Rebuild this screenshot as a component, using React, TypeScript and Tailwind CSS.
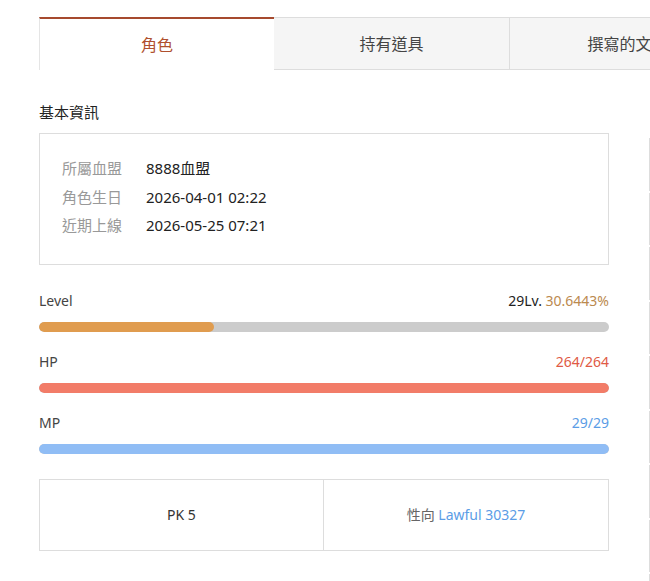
const FONT = "font-['Noto_Sans','Noto_Sans_CJK_TC',sans-serif]";

const tabs = ["角色", "持有道具", "撰寫的文章"];

const info = [
  { label: "所屬血盟", value: "8888血盟" },
  { label: "角色生日", value: "2026-04-01 02:22" },
  { label: "近期上線", value: "2026-05-25 07:21" },
];

function StatBar({
  label,
  right,
  percent,
  fill,
  track,
}: {
  label: string;
  right: React.ReactNode;
  percent: number;
  fill: string;
  track: string;
}) {
  return (
    <div>
      <div className="flex h-[20px] items-center justify-between text-[14px] text-[#444]">
        <span>{label}</span>
        <span>{right}</span>
      </div>
      <div className={`mt-[11px] h-[10px] w-full overflow-hidden rounded-full ${track}`}>
        <div className={`h-full rounded-full ${fill}`} style={{ width: `${percent}%` }} />
      </div>
    </div>
  );
}

export default function App() {
  return (
    <div className={`h-[581px] w-[650px] overflow-hidden bg-white ${FONT}`}>
      <div className="pl-[39px] pt-[17px]">
        <div className="flex w-[720px]">
          {tabs.map((t, i) =>
            i === 0 ? (
              <div
                key={t}
                className="flex h-[53px] w-[235px] items-center justify-center border-t-2 border-l border-t-[#a64a2e] border-l-[#e5e5e5] bg-white text-[16px] text-[#b0502e]"
              >
                {t}
              </div>
            ) : (
              <div
                key={t}
                className="flex h-[53px] w-[236px] items-center justify-center border-t border-r border-b border-[#dddddd] bg-[#f5f5f5] pt-px text-[16px] text-[#444]"
              >
                {t}
              </div>
            )
          )}
        </div>

        <div className="flex gap-[40px]">
          <div className="w-[570px] shrink-0">
            <h2 className="mt-[32px] h-[20px] text-[15px] leading-[20px] text-[#222]">基本資訊</h2>

            <div className="mt-[11px] border border-[#dddddd] pt-[20px] pb-[24px] pl-[22px]">
              {info.map((r) => (
                <div key={r.label} className="flex h-[28.5px] items-center text-[15px]">
                  <span className="w-[84px] text-[#999]">{r.label}</span>
                  <span className="text-[#222]">{r.value}</span>
                </div>
              ))}
            </div>

            <div className="mt-[26px]">
              <StatBar
                label="Level"
                right={
                  <>
                    <span className="text-[#222]">29Lv. </span>
                    <span className="text-[#bb8a4f]">30.6443%</span>
                  </>
                }
                percent={30.6443}
                fill="bg-[#e09c4f]"
                track="bg-[#cccccc]"
              />
            </div>
            <div className="mt-[20px]">
              <StatBar
                label="HP"
                right={<span className="text-[#e05a45]">264/264</span>}
                percent={100}
                fill="bg-[#f27c68]"
                track="bg-[#cccccc]"
              />
            </div>
            <div className="mt-[20px]">
              <StatBar
                label="MP"
                right={<span className="text-[#5b9de6]">29/29</span>}
                percent={100}
                fill="bg-[#90bdf5]"
                track="bg-[#cccccc]"
              />
            </div>

            <div className="mt-[25px] grid h-[72px] grid-cols-2 border border-[#dddddd] text-[14px]">
              <div className="flex items-center justify-center border-r border-[#dddddd] text-[#333]">
                PK 5
              </div>
              <div className="flex items-center justify-center text-[#666]">
                性向&nbsp;<span className="text-[#5b9de6]">Lawful 30327</span>
              </div>
            </div>
          </div>

          <div className="mt-[68px] w-[200px] shrink-0">
            {Array.from({ length: 9 }).map((_, i) => (
              <div key={i} className="mb-[2px] h-[52.5px] border-l border-[#dddddd]" />
            ))}
          </div>
        </div>
      </div>
    </div>
  );
}
